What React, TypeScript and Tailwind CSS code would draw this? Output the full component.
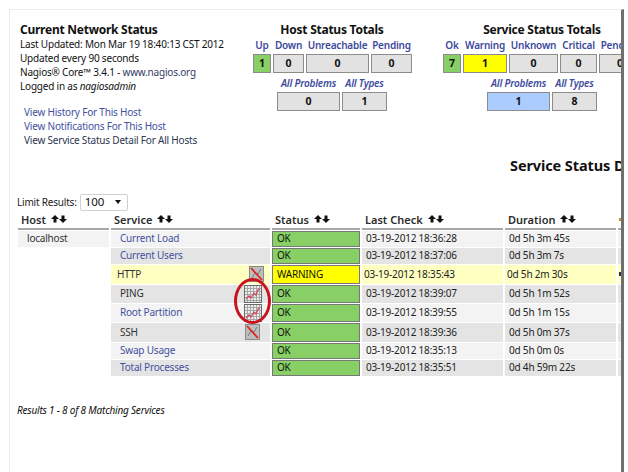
import React from 'react';

// ---------------------------------------------------------------------------
// Data
// ---------------------------------------------------------------------------

interface ServiceRow {
  name: string;
  link: boolean;
  status: string;
  lastCheck: string;
  duration: string;
  graph?: 'on' | 'off';
  h: string;
  iconPad?: string;
}

const rows: ServiceRow[] = [
  { name: 'Current Load', link: true, status: 'OK', lastCheck: '03-19-2012 18:36:28', duration: '0d 5h 3m 45s', h: 'h-[16px]' },
  { name: 'Current Users', link: true, status: 'OK', lastCheck: '03-19-2012 18:37:06', duration: '0d 5h 3m 7s', h: 'h-[16px]' },
  { name: 'HTTP', link: false, status: 'WARNING', lastCheck: '03-19-2012 18:35:43', duration: '0d 5h 2m 30s', graph: 'off', h: 'h-[19px]', iconPad: 'pr-[6px]' },
  { name: 'PING', link: false, status: 'OK', lastCheck: '03-19-2012 18:39:07', duration: '0d 5h 1m 52s', graph: 'on', h: 'h-[18px]', iconPad: 'pr-[8px]' },
  { name: 'Root Partition', link: true, status: 'OK', lastCheck: '03-19-2012 18:39:55', duration: '0d 5h 1m 15s', graph: 'on', h: 'h-[18px]', iconPad: 'pr-[8px]' },
  { name: 'SSH', link: false, status: 'OK', lastCheck: '03-19-2012 18:39:36', duration: '0d 5h 0m 37s', graph: 'off', h: 'h-[19px]', iconPad: 'pr-[10px]' },
  { name: 'Swap Usage', link: true, status: 'OK', lastCheck: '03-19-2012 18:35:13', duration: '0d 5h 0m 0s', h: 'h-[16px]' },
  { name: 'Total Processes', link: true, status: 'OK', lastCheck: '03-19-2012 18:35:51', duration: '0d 4h 59m 22s', h: 'h-[16px]' },
];

// ---------------------------------------------------------------------------
// Small pieces
// ---------------------------------------------------------------------------

const SortArrows: React.FC = () => (
  <svg width="16" height="8" viewBox="0 0 16 8" className="mb-[5px] ml-[5px] inline-block">
    <path d="M4 0 L8 4 H5.5 V7.5 H2.5 V4 H0 Z" fill="#111" />
    <path d="M12 8 L16 4 H13.5 V0.5 H10.5 V4 H8 Z" fill="#111" />
  </svg>
);

const GraphIcon: React.FC = () => (
  <svg width="18" height="18" viewBox="0 0 18 18" className="block">
    <rect x="0.5" y="0.5" width="17" height="17" fill="#ececec" stroke="#6a6a6a" />
    <path
      d="M3.5 1V17M6.5 1V17M9.5 1V17M12.5 1V17M15.5 1V17M1 3.5H17M1 6.5H17M1 9.5H17M1 12.5H17M1 15.5H17"
      stroke="#9a9a9a"
      strokeWidth="0.8"
    />
    <path d="M2 14 L5 11 L7 13 L10 8 L12 10 L14 5 L16 4" fill="none" stroke="#cf4a62" strokeWidth="1.3" />
  </svg>
);

const GraphOffIcon: React.FC = () => (
  <svg width="15" height="16" viewBox="0 0 15 16" className="block">
    <rect x="0.5" y="0.5" width="14" height="15" fill="#bdbdbd" stroke="#8a8a8a" />
    <path d="M12 3 L9 8 L6 7 L3 12" fill="none" stroke="#777" strokeWidth="1" />
    <path d="M2 2 L13 14" stroke="#e0201c" strokeWidth="1.8" />
  </svg>
);

const Total: React.FC<{ label: string; value: number; w: string; bg?: string; italic?: boolean }> = ({
  label,
  value,
  w,
  bg = 'bg-[#e2e2e2]',
  italic,
}) => (
  <div className={`flex shrink-0 flex-col items-center ${w}`}>
    <span
      className={`h-[14px] whitespace-nowrap text-[10px] leading-[14px] text-[#3d4a9c] ${
        italic ? 'font-semibold italic' : 'font-semibold'
      }`}
    >
      {label}
    </span>
    <div
      className={`mt-[2px] flex h-[19px] w-full items-center justify-center border border-[#8c8c8c] text-[10.5px] font-bold text-[#111] ${bg}`}
    >
      {value}
    </div>
  </div>
);

// ---------------------------------------------------------------------------
// Page
// ---------------------------------------------------------------------------

export default function App() {
  return (
    <div className="h-[472px] w-[628px] overflow-hidden bg-white pl-[9px] pt-[9px] font-['Noto_Sans',sans-serif] text-[10px] tracking-[-0.2px] text-[#222]">
      <div className="relative h-[480px] w-[615px] overflow-hidden border-l border-t border-[#ececec] border-r-[3px] border-r-[#6f6f6f] bg-white">
        {/* Top summary */}
        <div className="flex h-[145px] pt-[12px]">
          <div className="w-[243px] shrink-0 pl-[10px] leading-[14px]">
            <h1 className="text-[12px] font-bold leading-[15px] tracking-[-0.25px] text-[#111]">Current Network Status</h1>
            <p className="text-[#111]">Last Updated: Mon Mar 19 18:40:13 CST 2012</p>
            <p className="text-[#111]">Updated every 90 seconds</p>
            <p className="text-[#111]">
              Nagios® Core™ 3.4.1 - <span className="text-[#333a66]">www.nagios.org</span>
            </p>
            <p className="text-[#111]">
              Logged in as <i>nagiosadmin</i>
            </p>
            <div className="mt-[12px] pl-[4px]">
              <p className="text-[#4450a0]">View History For This Host</p>
              <p className="text-[#4450a0]">View Notifications For This Host</p>
              <p className="text-[#2c3550]">View Service Status Detail For All Hosts</p>
            </div>
          </div>

          <div className="w-[190px] shrink-0">
            <h2 className="w-[158px] text-center text-[12px] font-bold leading-[15px] tracking-[-0.25px] text-[#111]">
              Host Status Totals
            </h2>
            <div className="mt-[1px] flex gap-[2px]">
              <Total label="Up" value={1} w="w-[18px]" bg="bg-[#88d066]" />
              <Total label="Down" value={0} w="w-[31px]" />
              <Total label="Unreachable" value={0} w="w-[63px]" />
              <Total label="Pending" value={0} w="w-[41px]" />
            </div>
            <div className="mt-[3px] flex gap-[2px] pl-[24px]">
              <Total label="All Problems" value={0} w="w-[63px]" italic />
              <Total label="All Types" value={1} w="w-[45px]" italic />
            </div>
          </div>

          <div className="min-w-0 flex-1">
            <h2 className="w-[198px] text-center text-[12px] font-bold leading-[15px] tracking-[-0.25px] text-[#111]">
              Service Status Totals
            </h2>
            <div className="mt-[1px] flex gap-[2px]">
              <Total label="Ok" value={7} w="w-[18px]" bg="bg-[#88d066]" />
              <Total label="Warning" value={1} w="w-[44px]" bg="bg-[#ffff00]" />
              <Total label="Unknown" value={0} w="w-[49px]" />
              <Total label="Critical" value={0} w="w-[37px]" />
              <Total label="Pending" value={0} w="w-[42px]" />
            </div>
            <div className="mt-[3px] flex gap-[2px] pl-[44px]">
              <Total label="All Problems" value={1} w="w-[63px]" bg="bg-[#aaccff]" italic />
              <Total label="All Types" value={8} w="w-[45px]" italic />
            </div>
          </div>
        </div>

        <div className="whitespace-nowrap pl-[500px] text-[14.5px] font-bold leading-[20px] tracking-[-0.1px] text-[#111]">
          Service Status Details For All Hosts
        </div>

        <div className="mt-[18px] flex h-[18px] items-center pl-[7px]">
          <span>Limit Results:</span>
          <div className="ml-[3px] flex h-[17px] w-[48px] items-center justify-between rounded-[2px] border border-[#d0d0d0] pl-[4px] pr-[6px] text-[11.5px] tracking-normal text-[#111]">
            100
            <span className="h-0 w-0 border-x-[3.5px] border-t-[4px] border-x-transparent border-t-[#111]" />
          </div>
        </div>

        {/* Service table */}
        <table className="ml-[6px] mt-[1px] w-[624px] max-w-none table-fixed border-separate border-spacing-x-[2px] border-spacing-y-[1px] leading-[13px]">
          <colgroup>
            <col className="w-[91px]" />
            <col className="w-[159px]" />
            <col className="w-[88px]" />
            <col className="w-[141px]" />
            <col className="w-[111px]" />
            <col className="w-[20px]" />
          </colgroup>
          <thead>
            <tr className="h-[16px] text-left text-[11px] font-semibold tracking-normal text-[#2c2c2c]">
              {['Host', 'Service', 'Status', 'Last Check', 'Duration'].map((label) => (
                <th key={label} className="border-b-2 border-[#a8a8a8] pl-[3px] font-semibold whitespace-nowrap">
                  {label}
                  <SortArrows />
                </th>
              ))}
              <th className="border-b-2 border-[#a8a8a8] pl-[1px]">
                <span className="mb-[2px] block h-[3px] w-[3px] bg-[#d98a30]" />
              </th>
            </tr>
          </thead>
          <tbody>
            {rows.map((row, i) => {
              const warn = row.status === 'WARNING';
              const shade = warn ? 'bg-[#feffc1]' : i % 2 === 0 ? 'bg-[#f3f3f3]' : 'bg-[#e4e4e4]';
              return (
                <tr key={row.name} className={row.h}>
                  {i === 0 && (
                    <td rowSpan={8} className="p-0 align-top">
                      <div className="flex h-[16px] items-center bg-[#f3f3f3] pl-[9px] text-[#333]">localhost</div>
                    </td>
                  )}
                  <td className={`p-0 ${shade}`}>
                    <div className={`flex items-center justify-between ${warn ? 'pl-[6px]' : 'pl-[9px]'} ${row.iconPad ?? ''}`}>
                      <span className={row.link ? 'text-[#4450a0]' : 'text-[#333]'}>{row.name}</span>
                      {row.graph === 'on' && <GraphIcon />}
                      {row.graph === 'off' && <GraphOffIcon />}
                    </div>
                  </td>
                  <td className={`border border-[#777] p-0 pl-[4px] text-[#111] ${warn ? 'bg-[#ffff00]' : 'bg-[#88d066]'}`}>
                    {row.status}
                  </td>
                  <td className={`p-0 text-[#222] ${warn ? 'pl-[2px]' : 'pl-[4px]'} ${shade}`}>{row.lastCheck}</td>
                  <td className={`p-0 text-[#222] ${warn ? 'pl-[2px]' : 'pl-[4px]'} ${shade}`}>{row.duration}</td>
                  <td className={`p-0 pl-[1px] ${shade}`}>
                    {warn && <span className="block h-[4px] w-[3px] bg-[#333]" />}
                  </td>
                </tr>
              );
            })}
          </tbody>
        </table>

        <p className="mt-[26px] pl-[7px] italic text-[#111]">Results 1 - 8 of 8 Matching Services</p>

        {/* Red marker drawn round the two graph icons */}
        <div className="absolute left-[224px] top-[268px] h-[46px] w-[37px] rounded-[50%] border-[3px] border-[#c8141e]" />
      </div>
    </div>
  );
}
